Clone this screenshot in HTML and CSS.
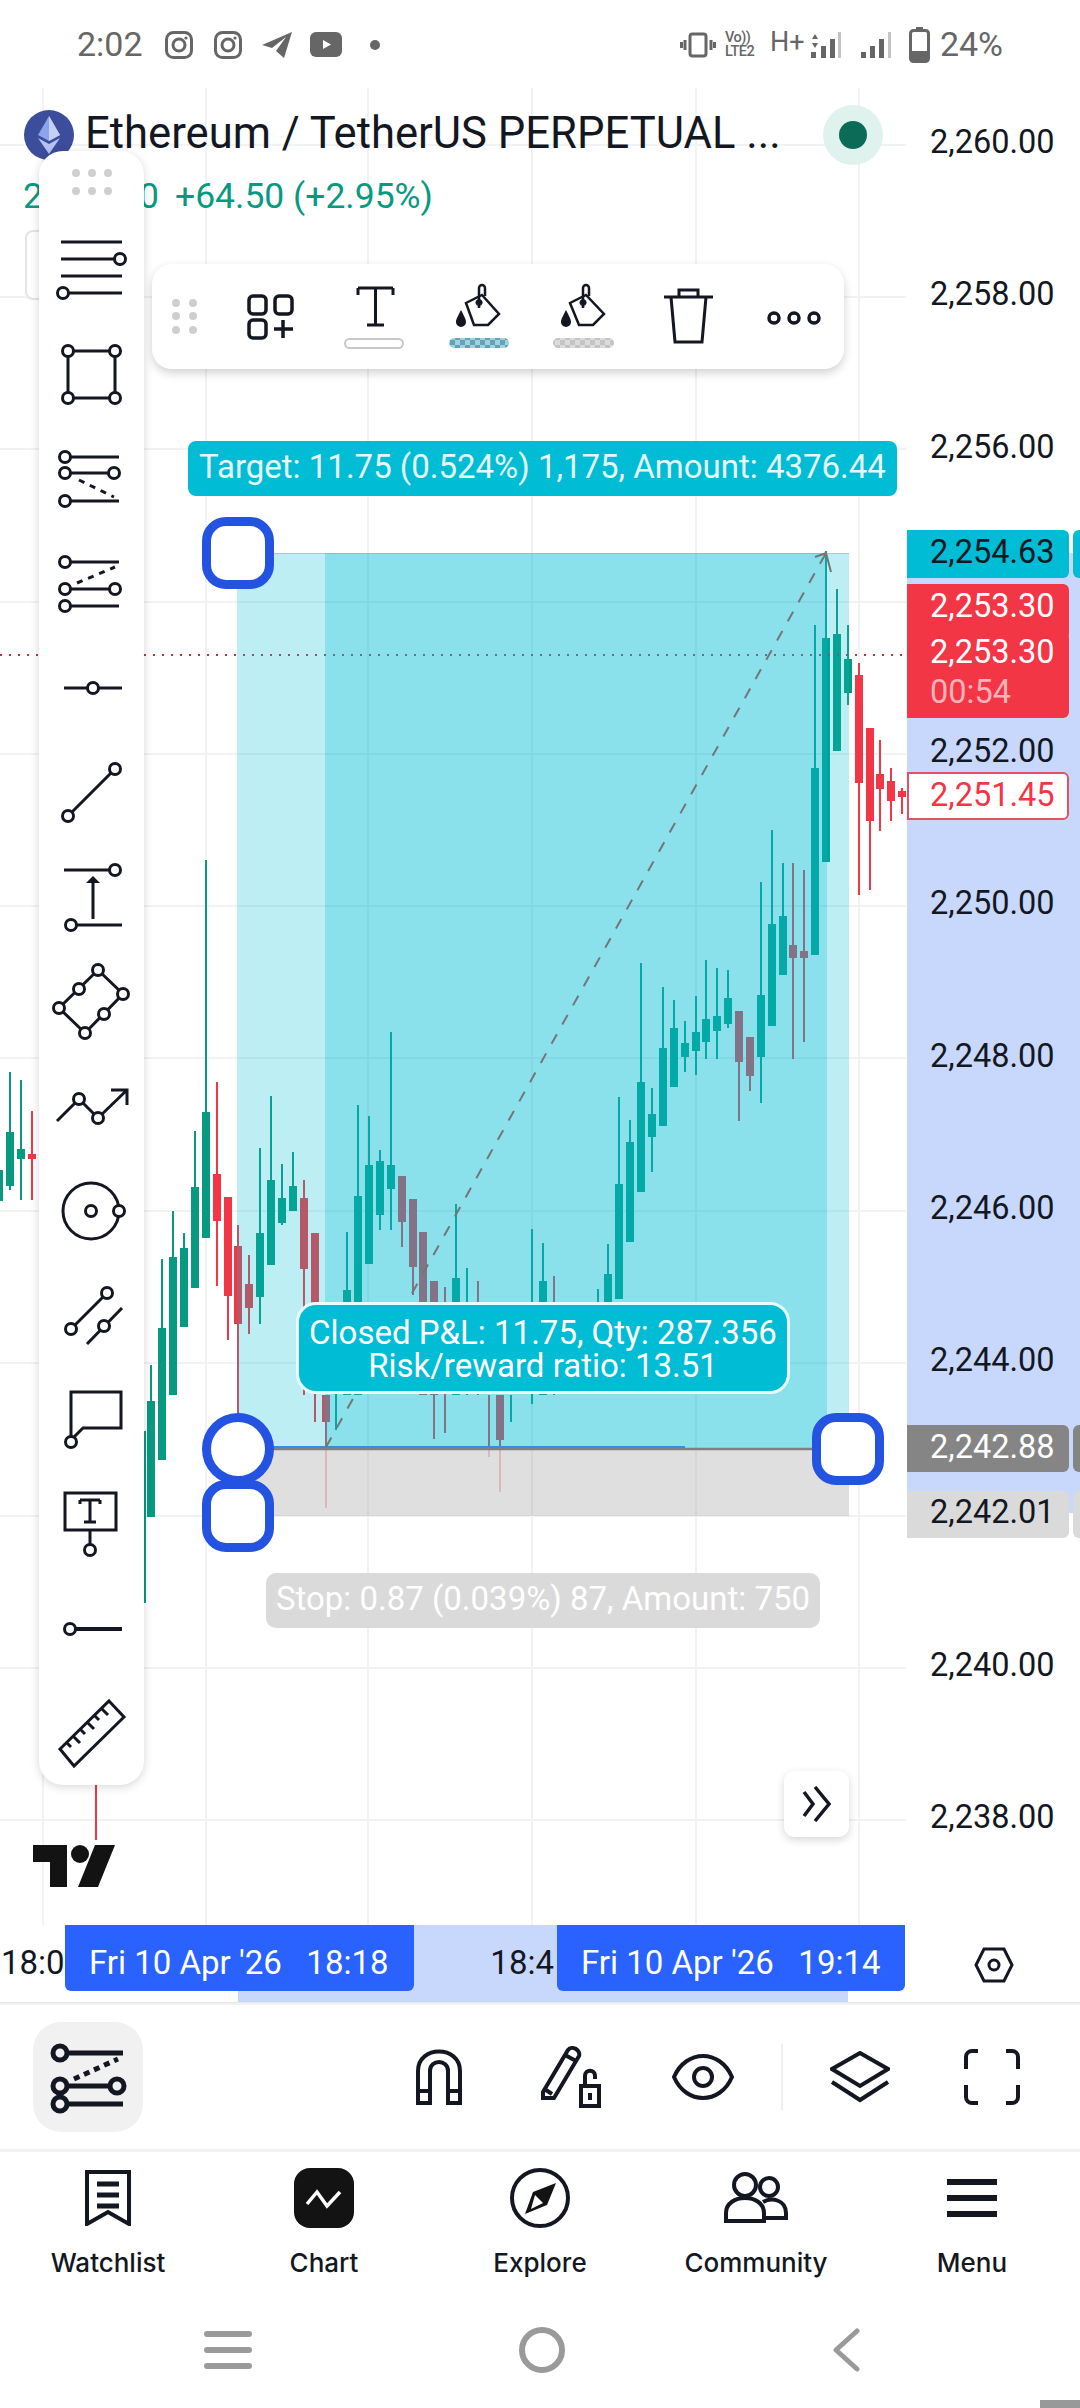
FILE: index.html
```html
<!DOCTYPE html>
<html lang="en">
<head>
<meta charset="utf-8">
<title>Ethereum / TetherUS chart</title>
<link rel="stylesheet" href="styles.css">
</head>
<body>
<div class="screen">
  <div class="status">
    <span class="time">2:02</span>
    <svg class="st st-ig1" width="28" height="28" viewBox="0 0 28 28"><rect x="1.5" y="1.5" width="25" height="25" rx="7"/><circle cx="14" cy="14" r="6"/><circle class="f" cx="21" cy="7" r="1.6"/></svg>
    <svg class="st st-ig2" width="28" height="28" viewBox="0 0 28 28"><rect x="1.5" y="1.5" width="25" height="25" rx="7"/><circle cx="14" cy="14" r="6"/><circle class="f" cx="21" cy="7" r="1.6"/></svg>
    <svg class="st st-tg" width="30" height="28" viewBox="0 0 30 28"><path class="f" d="M30 1 L0 14 L10 17 L24 6 L14 20 L22 27 Z"/></svg>
    <svg class="st st-yt" width="32" height="26" viewBox="0 0 32 26"><rect class="f" x="0" y="0" width="32" height="25" rx="6"/><path class="wf" d="M13 8 L21 12.5 L13 17 Z"/></svg>
    <span class="st-dot"></span>
    <span class="status-gap"></span>
    <svg class="st st-vib" width="36" height="26" viewBox="0 0 36 26"><rect x="10" y="2" width="16" height="22" rx="2.5"/><path d="M5 8V18M1.500 10V16M31 8V18M34.500 10V16"/></svg>
    <span class="volte">Vo))<br>LTE2</span>
    <span class="hplus">H+</span>
    <svg class="st st-sig1" width="32" height="28" viewBox="0 0 32 28"><path class="f" d="M2 8L5 3L8 8ZM2 12L5 17L8 12Z"/><path class="f" d="M1 21h5v6H1zM11 15h5v12h-5zM20 8h5v19h-5z"/><path class="f lt" d="M28 1h3v26h-3z"/></svg>
    <svg class="st st-sig2" width="32" height="28" viewBox="0 0 32 28"><path class="f" d="M1 21h5v6H1zM10 15h5v12h-5zM19 8h5v19h-5z"/><path class="f lt" d="M28 1h3v26h-3z"/></svg>
    <svg class="st st-bat" width="21" height="36" viewBox="0 0 21 36"><path class="f" d="M7 0h7v3H7z"/><rect x="1.500" y="3.500" width="18" height="31" rx="3"/><path class="f" d="M2 24h17v9a2 2 0 0 1-2 2H4a2 2 0 0 1-2-2z"/></svg>
    <span class="pct">24%</span>
  </div>

  <div class="chart-row">
    <div class="plot">
      <svg class="canvas" width="907" height="1837" viewBox="0 88 907 1837">
        <path class="grid" d="M0 145H906M0 297H906M0 449H906M0 602H906M0 754H906M0 906H906M0 1058H906M0 1211H906M0 1363H906M0 1516H906M0 1668H906M0 1820H906M43 88V1925M206 88V1925M368 88V1925M532 88V1925M696 88V1925M859 88V1925"/>
        <path class="wick g" d="M10 1072V1190M21 1080V1200M145 1431V1603M151 1365V1517M162 1259V1460M173 1211V1395M184 1233V1327M195 1131V1288M206 860V1238M260 1148V1324M271 1096V1265M282 1164V1225M293 1152V1211M336 1390V1430M347 1232V1395M358 1105V1395M369 1116V1264M380 1150V1230M391 1032V1230M456 1204V1395M467 1268V1395M511 1395V1422M532 1229V1404M543 1243V1395M598 1289V1302M608 1244V1302M619 1097V1299M630 1120V1242M641 963V1192M652 1088V1172M663 987V1126M674 1000V1087M685 1021V1072M696 996V1075M706 960V1059M717 968V1059M728 970V1028M761 882V1103M772 830V1026M783 863V975M815 625V955M826 551V862M837 589V751M848 625V705"/>
        <path class="body g" d="M-1 1170V1201M10 1132V1186M21 1149V1159M151 1401V1517M162 1328V1460M173 1257V1395M184 1248V1327M195 1187V1288M206 1112V1238M260 1233V1297M271 1180V1265M282 1198V1223M293 1186V1211M347 1290V1395M358 1196V1395M369 1165V1264M380 1161V1215M391 1165V1189M456 1278V1395M543 1281V1395M608 1274V1302M619 1184V1299M630 1142V1242M641 1082V1192M652 1114V1137M663 1048V1126M674 1028V1087M685 1043V1057M696 1032V1051M706 1019V1042M717 1016V1031M728 998V1024M761 995V1057M772 924V1026M783 916V975M815 768V955M826 638V862M837 634V751M848 659V693"/>
        <path class="wick r" d="M32 1111V1200M96 1785V1840M217 1082V1286M228 1197V1340M238 1225V1413M249 1255V1334M304 1180V1395M315 1233V1422M326 1395V1447M402 1176V1247M413 1199V1295M423 1232V1395M434 1281V1439M445 1287V1433M478 1281V1395M489 1395V1447M500 1395V1447M554 1276V1395M739 1011V1121M750 1037V1091M793 863V1059M804 870V1042M859 663V895M870 728V890M880 740V831M891 768V821M902 788V814"/>
        <path class="body r" d="M32 1154V1159M217 1174V1221M228 1197V1296M238 1246V1324M249 1284V1308M304 1198V1269M315 1233V1334M326 1395V1422M402 1176V1222M413 1199V1267M423 1232V1395M434 1281V1395M500 1395V1440M739 1011V1062M750 1037V1076M793 945V958M804 951V958M859 675V783M870 728V821M880 774V789M891 781V801M902 791V797"/>
        <path class="dots" d="M0 655H906"/>
        <rect class="zone-a" x="237" y="553" width="612" height="895"/>
        <rect class="zone-b" x="325" y="553" width="502" height="895"/>
        <rect class="zone-s" x="237" y="1448" width="612" height="68"/>
        <path class="wick pale" d="M326 1449V1508M489 1449V1457M500 1449V1492"/>
        <path class="zone-top" d="M237 553.500H849"/>
        <path class="entry" d="M237 1449H849"/>
        <path class="entry-blue" d="M270 1447H685"/>
        <path class="dash" d="M326 1447L826 553"/>
        <path class="arrow" d="M815 557L826 553L831 572"/>
      </svg>

      <div class="box-behind"></div>
      <div class="header">
        <div class="title-wrap">
          <svg class="eth" width="50" height="50" viewBox="0 0 50 50"><circle cx="25" cy="25" r="25" fill="#3b4d9b"/><path d="M25 6L14 25L25 31L36 25Z" fill="#8da3ea"/><path d="M25 6V31L36 25Z" fill="#c3cff5"/><path d="M14 28L25 44L36 28L25 34Z" fill="#b4c3f1"/></svg>
          <span class="title">Ethereum / TetherUS PERPETUAL ...</span>
        </div>
        <span class="live"><span class="live-dot"></span></span>
      </div>
      <div class="quote"><span class="q-price">2,253.30</span><span>+64.50 (+2.95%)</span></div>

      <div class="handle sq h-tl"></div>
      <div class="handle sq h-bl"></div>
      <div class="handle rd h-ml"></div>
      <div class="handle sq h-mr"></div>

      <div class="tag tag-target">Target: 11.75 (0.524%) 1,175, Amount: 4376.44</div>
      <div class="tag tag-stop">Stop: 0.87 (0.039%) 87, Amount: 750</div>
      <div class="tag tag-pnl">Closed P&amp;L: 11.75, Qty: 287.356<br>Risk/reward ratio: 13.51</div>

      <div class="float-bar">
        <svg class="ft" width="692" height="105" viewBox="152 264 692 105">
          <defs>
            <pattern id="chk-a" width="10" height="10" patternUnits="userSpaceOnUse"><rect width="10" height="10" fill="#a5cfdc"/><rect width="5" height="5" fill="#5fa5ba"/><rect x="5" y="5" width="5" height="5" fill="#5fa5ba"/></pattern>
            <pattern id="chk-b" width="10" height="10" patternUnits="userSpaceOnUse"><rect width="10" height="10" fill="#dcdcdc"/><rect width="5" height="5" fill="#c4c4c4"/><rect x="5" y="5" width="5" height="5" fill="#c4c4c4"/></pattern>
          </defs>
          <path class="grip" d="M176 303v.01M193 303v.01M176 316v.01M193 316v.01M176 330v.01M193 330v.01"/>
          <g class="ln">
            <rect x="249" y="296" width="17" height="18" rx="4"/><rect x="275" y="296" width="17" height="18" rx="4"/><rect x="249" y="320" width="17" height="18" rx="4"/>
            <path d="M283 320V338M274 329H293"/>
            <path d="M358 288H393M358 288V295M393 288V295M375.500 288V325M367 325H384" class="thin"/>
            <path class="b" d="M466 303L482 295L499 314L488 325L474 325Z"/><path class="b" d="M479 308V288a3 3 0 0 1 6 0V296"/>
            <path class="b" d="M570 303L586 295L604 314L593 325L579 325Z"/><path class="b" d="M583 308V288a3 3 0 0 1 6 0V296"/>
            <path class="thin" d="M664 297H713M671 297L675 342H702L706 297M679 297V290H698V297"/>
            <circle cx="774" cy="318" r="5"/><circle cx="794" cy="318" r="5"/><circle cx="814" cy="318" r="5"/>
          </g>
          <path class="solid" d="M461 310C464 316 466 319 466 322a5 5 0 0 1-10 0C456 319 458 316 461 310ZM566 310C569 316 571 319 571 322a5 5 0 0 1-10 0C561 319 563 316 566 310ZM479 306a3.500 3.500 0 1 1 .1 0ZM583 306a3.500 3.500 0 1 1 .1 0Z"/>
          <rect class="sw-t" x="345" y="339" width="58" height="9" rx="4.500"/>
          <rect x="449" y="338" width="60" height="10" rx="5" fill="url(#chk-a)"/>
          <rect x="553" y="338" width="61" height="10" rx="5" fill="url(#chk-b)"/>
        </svg>
      </div>

      <div class="left-bar">
        <svg class="grip-top" width="40" height="32" viewBox="0 0 40 32"><path class="grip" d="M4 6v.01M20 6v.01M36 6v.01M4 24v.01M20 24v.01M36 24v.01"/></svg>
        <div class="tool"><svg class="ic" viewBox="0 0 88 88"><path d="M13 16H74M13 33H66M13 50H74M21 67H74"/><circle cx="72" cy="33" r="5.500"/><circle cx="15" cy="67" r="5.500"/></svg></div>
        <div class="tool"><svg class="ic" viewBox="0 0 88 88"><path d="M20 20H67V67H20Z"/><circle cx="20" cy="20" r="5.500"/><circle cx="67" cy="20" r="5.500"/><circle cx="20" cy="67" r="5.500"/><circle cx="67" cy="67" r="5.500"/></svg></div>
        <div class="tool"><svg class="ic" viewBox="0 0 88 88"><path d="M17 22H71M17 38H66M17 66H71"/><path class="dsh" d="M31 45L66 62"/><circle cx="17" cy="22" r="5.500"/><circle cx="17" cy="38" r="5.500"/><circle cx="66" cy="38" r="5.500"/><circle cx="17" cy="66" r="5.500"/></svg></div>
        <div class="tool"><svg class="ic" viewBox="0 0 88 88"><path d="M17 22H71M17 49H67M17 66H71"/><path class="dsh" d="M29 43L67 27"/><circle cx="17" cy="22" r="5.500"/><circle cx="17" cy="49" r="5.500"/><circle cx="67" cy="49" r="5.500"/><circle cx="17" cy="66" r="5.500"/></svg></div>
        <div class="tool"><svg class="ic" viewBox="0 0 88 88"><path d="M16 44H74"/><circle cx="45" cy="44" r="5.500"/></svg></div>
        <div class="tool"><svg class="ic" viewBox="0 0 88 88"><path d="M20 67L67 20"/><circle cx="20" cy="67" r="5.500"/><circle cx="67" cy="20" r="5.500"/></svg></div>
        <div class="tool"><svg class="ic" viewBox="0 0 88 88"><path d="M16 17H67M23 72H74M45 66V30"/><path class="fl" d="M38 30H52L45 23Z"/><circle cx="67" cy="17" r="5.500"/><circle cx="23" cy="72" r="5.500"/></svg></div>
        <div class="tool"><svg class="ic" viewBox="0 0 88 88"><path d="M50 12L75 36L37 75L11 50Z"/><circle cx="50" cy="12" r="5.500"/><circle cx="75" cy="36" r="5.500"/><circle cx="56" cy="56" r="5.500"/><circle cx="37" cy="75" r="5.500"/><circle cx="11" cy="50" r="5.500"/><circle cx="31" cy="31" r="5.500"/></svg></div>
        <div class="tool"><svg class="ic" viewBox="0 0 88 88"><path d="M9 59L31 37L50 56L79 28M63 28H79V43"/><circle cx="31" cy="37" r="5.500"/><circle cx="50" cy="56" r="5.500"/></svg></div>
        <div class="tool"><svg class="ic" viewBox="0 0 88 88"><circle cx="43" cy="44" r="28"/><circle cx="43" cy="44" r="5.500"/><circle cx="71" cy="44" r="5.500"/></svg></div>
        <div class="tool"><svg class="ic" viewBox="0 0 88 88"><path d="M23 58L59 22M39 73L74 37"/><circle cx="23" cy="58" r="5.500"/><circle cx="59" cy="22" r="5.500"/><circle cx="56" cy="55" r="5.500"/></svg></div>
        <div class="tool"><svg class="ic" viewBox="0 0 88 88"><path d="M23 60V16H73V52H35L25 62"/><circle cx="23" cy="66" r="5.500"/></svg></div>
        <div class="tool"><svg class="ic" viewBox="0 0 88 88"><path d="M17 13H68V50H17ZM42 50V64M32 20H52M32 20V24M52 20V24M42 20V42M36 42H48"/><circle cx="42" cy="70" r="5.500"/></svg></div>
        <div class="tool"><svg class="ic" viewBox="0 0 88 88"><path class="th" d="M28 44H74"/><circle cx="22" cy="44" r="5.500"/></svg></div>
        <div class="tool"><svg class="ic" viewBox="0 0 88 88"><path d="M61 12L76 28L26 77L12 60ZM54 20L60 26M47 27L51 31M40 34L46 40M33 41L37 45M26 48L32 54M19 54L23 58"/></svg></div>
      </div>

      <div class="expand"><svg width="30" height="36" viewBox="0 0 30 36"><path d="M2 6L11 18L2 30M13 1L27 18L13 35"/></svg></div>
      <svg class="tv" width="82" height="42" viewBox="0 0 82 42"><path d="M0 0H34V42H17V17H0ZM82 0L65 42H45L62 0Z"/><circle cx="47" cy="9" r="9"/></svg>
    </div>

    <div class="axis">
      <div class="range"></div>
      <div class="rows">
        <div class="row">2,260.00</div><div class="row">2,258.00</div><div class="row">2,256.00</div><div class="row"></div>
        <div class="row">2,252.00</div><div class="row">2,250.00</div><div class="row">2,248.00</div><div class="row">2,246.00</div>
        <div class="row">2,244.00</div><div class="row"></div><div class="row">2,240.00</div><div class="row">2,238.00</div>
      </div>
      <div class="pt pt-cy pt-target">2,254.63</div><div class="pt-tab cy t-target"></div>
      <div class="pt pt-rd pt-r1">2,253.30</div>
      <div class="pt pt-rd pt-r2">2,253.30<br><span class="cd">00:54</span></div>
      <div class="pt pt-ol">2,251.45</div>
      <div class="pt pt-gr">2,242.88</div><div class="pt-tab gr t-gr"></div>
      <div class="pt pt-lg">2,242.01</div><div class="pt-tab lg t-lg"></div>
    </div>
  </div>

  <div class="time-axis">
    <div class="t-range"></div>
    <span class="t-a">18:0</span>
    <span class="chip chip-a">Fri 10 Apr '26&nbsp;&nbsp;&nbsp;18:18</span>
    <span class="t-b">18:4</span>
    <span class="chip chip-b">Fri 10 Apr '26&nbsp;&nbsp;&nbsp;19:14</span>
    <span class="t-set"><svg width="40" height="36" viewBox="0 0 40 36"><path d="M10 2H30L38 18L30 34H10L2 18Z"/><circle cx="20" cy="18" r="5"/></svg></span>
  </div>

  <div class="tools">
    <div class="pill"><svg width="100" height="76" viewBox="0 0 100 76"><path d="M26 14H85M26 47H79M26 65H85"/><path class="d" d="M36 40L80 20"/><circle cx="22" cy="14" r="7"/><circle cx="22" cy="47" r="7"/><circle cx="79" cy="47" r="7"/><circle cx="22" cy="65" r="7"/></svg></div>
    <div class="tool-btn"><svg width="46" height="56" viewBox="0 0 46 56"><path d="M2 54V22C2 -4 44 -4 44 22V54H32V22C32 10 14 10 14 22V54ZM2 42H14M32 42H44"/></svg></div>
    <div class="tool-btn"><svg width="60" height="62" viewBox="0 0 60 62"><path d="M2 46L27 4C31 -1 40 4 38 10L13 52L2 52ZM24 9L35 15M2 42L11 48"/><path d="M40 40H58V60H40ZM44 40V30C44 23 54 23 54 30V33"/><path class="bf" d="M47 47h4v7h-4z"/></svg></div>
    <div class="tool-btn"><svg width="62" height="46" viewBox="0 0 62 46"><path d="M2 23C14 -5 48 -5 60 23C48 51 14 51 2 23Z"/><circle cx="31" cy="23" r="9"/></svg></div>
    <span class="tool-sep"></span>
    <div class="tool-btn"><svg width="60" height="52" viewBox="0 0 60 52"><path d="M30 2L58 18L30 35L2 18ZM2 31L30 49L58 31"/></svg></div>
    <div class="tool-btn"><svg width="56" height="56" viewBox="0 0 56 56"><path d="M2 20V8a6 6 0 0 1 6-6H14M42 2H48a6 6 0 0 1 6 6V20M2 36V48a6 6 0 0 0 6 6H14M42 54H48a6 6 0 0 0 6-6V36"/></svg></div>
  </div>

  <div class="tabs">
    <div class="tab"><div class="tab-ic"><svg width="46" height="56" viewBox="0 0 46 56"><path class="t2" d="M2 2H44V54L23 42L2 54Z"/><path class="t3" d="M12 14H34M12 25H34M12 36H34"/></svg></div><span>Watchlist</span></div>
    <div class="tab"><div class="tab-ic"><svg width="60" height="60" viewBox="0 0 60 60"><rect class="black" width="60" height="60" rx="16"/><path class="wl" d="M13 36L23 24L33 38L46 24"/></svg></div><span>Chart</span></div>
    <div class="tab"><div class="tab-ic"><svg width="60" height="60" viewBox="0 0 60 60"><circle class="t2" cx="30" cy="30" r="28"/><path class="black" d="M46 15L37 37L15 46L23 24Z"/><path class="white" d="M21 41L25 27L33 35Z"/></svg></div><span>Explore</span></div>
    <div class="tab"><div class="tab-ic"><svg width="64" height="52" viewBox="0 0 64 52"><circle class="t2" cx="21" cy="13" r="11"/><ellipse class="t2" cx="45" cy="15" rx="9" ry="9"/><path class="t2" d="M2 49V41C2 21 40 21 40 41V49Z"/><path class="t2" d="M40 46H62V41C62 28 48 25 39 30"/></svg></div><span>Community</span></div>
    <div class="tab"><div class="tab-ic"><svg width="50" height="38" viewBox="0 0 50 38"><path class="bf" d="M0 0H50V6H0ZM0 16H50V22H0ZM0 32H50V38H0Z"/></svg></div><span>Menu</span></div>
  </div>

  <div class="nav">
    <svg width="48" height="42" viewBox="0 0 48 42"><path class="n" d="M3 5H45M3 21H45M3 37H45"/></svg>
    <span class="nav-circle"></span>
    <svg width="30" height="44" viewBox="0 0 30 44"><path class="c" d="M26 3L5 22L26 41"/></svg>
    <span class="corner"></span>
  </div>
</div>
</body>
</html>
```
FILE: styles.css
```css
* { box-sizing: border-box; }
html, body { margin: 0; padding: 0; background: #fff; }
body { font-family: Roboto, "Liberation Sans", sans-serif; color: #131722; }
.screen { width: 1080px; height: 2408px; display: flex; flex-direction: column; overflow: hidden; position: relative; background: #fff; }

/* status bar */
.status { flex: 0 0 88px; height: 88px; display: flex; align-items: center; padding: 2px 0 0 77px; color: #666; }
.time { font-size: 34px; width: 65px; margin-top: -2px; white-space: nowrap; }
.st rect, .st circle, .st path { fill: none; stroke: #666; stroke-width: 3; }
.st .f { fill: #666; stroke: none; }
.st .lt { fill: #c4c4c4; }
.st .wf { fill: #fff; stroke: none; }
.st-ig1 { margin-left: 23px; }
.st-ig2 { margin-left: 21px; }
.st-tg { margin-left: 20px; }
.st-yt { margin-left: 18px; }
.st-dot { width: 10px; height: 10px; border-radius: 50%; background: #666; margin-left: 28px; }
.status-gap { flex: 1; }
.volte { font-size: 14.500px; line-height: 14px; font-weight: 500; margin-left: 9px; width: 34px; letter-spacing: -0.5px; white-space: nowrap; }
.hplus { font-size: 27px; margin-left: 11px; width: 32px; margin-top: -6px; white-space: nowrap; }
.st-sig1 { margin-left: 8px; }
.st-sig2 { margin-left: 18px; }
.st-bat { margin-left: 17px; margin-top: -1px; }
.pct { font-size: 34px; margin: -2px 77px 0 10px; white-space: nowrap; }

/* chart */
.chart-row { flex: 0 0 1837px; height: 1837px; display: flex; position: relative; }
.plot { flex: 0 0 907px; position: relative; }
.canvas { display: block; position: absolute; left: 0; top: 0; }
.grid { stroke: #f1f2f4; stroke-width: 2; fill: none; }
.wick { stroke-width: 2; fill: none; }
.body { stroke-width: 8; fill: none; }
.g { stroke: #089981; }
.r { stroke: #f23645; }
.pale { stroke: #dfb7ba; }
.dots { stroke: #c2303f; stroke-width: 2; stroke-dasharray: 2 7; fill: none; }
.zone-a { fill: rgba(0, 188, 212, 0.26); }
.zone-b { fill: rgba(0, 188, 212, 0.27); }
.zone-s { fill: rgba(128, 128, 128, 0.25); }
.zone-top { stroke: rgba(0, 188, 212, 0.35); stroke-width: 1; }
.entry { stroke: #808080; stroke-width: 2.500; }
.entry-blue { stroke: #2f8fe0; stroke-width: 2; }
.dash { stroke: #757575; stroke-width: 2; stroke-dasharray: 11 11; fill: none; }
.arrow { stroke: #757575; stroke-width: 2; fill: none; }

.box-behind { position: absolute; left: 25px; top: 142px; width: 40px; height: 70px; border: 2px solid #e4e4e4; border-radius: 8px; background: #fff; }
.header { position: absolute; left: 24px; top: 17px; width: 859px; height: 60px; display: flex; align-items: center; justify-content: space-between; }
.title-wrap { display: flex; align-items: center; }
.eth { display: block; }
.title { font-size: 43.600px; margin-left: 11px; margin-top: -3px; color: #131722; white-space: nowrap; }
.live { width: 60px; height: 60px; border-radius: 50%; background: #dff2ee; display: flex; align-items: center; justify-content: center; }
.live-dot { width: 28px; height: 28px; border-radius: 50%; background: #0a6b57; }
.quote { position: absolute; left: 23px; top: 88px; font-size: 35.500px; line-height: 40px; color: #089981; white-space: nowrap; }
.q-price { display: inline-block; width: 152px; }

.handle { position: absolute; width: 72px; height: 72px; background: #fff; border: 9px solid #2453e1; }
.sq { border-radius: 24px; }
.rd { border-radius: 50%; }
.h-tl { left: 202px; top: 429px; }
.h-bl { left: 202px; top: 1392px; }
.h-ml { left: 202px; top: 1325px; }
.h-mr { left: 812px; top: 1325px; }

.tag { position: absolute; color: #fff; font-size: 33px; text-align: center; white-space: nowrap; }
.tag-target { left: 188px; top: 353px; width: 709px; height: 55px; line-height: 52px; background: #00bcd4; border-radius: 8px; color: #e6f9fc; }
.tag-stop { left: 266px; top: 1485px; width: 554px; height: 55px; line-height: 52px; background: #dadada; border-radius: 10px; }
.tag-pnl { left: 296px; top: 1214px; width: 494px; height: 92px; padding-top: 11px; line-height: 33px; background: #00bcd4; border: 3px solid #e8fbfd; border-radius: 20px; }

.float-bar { position: absolute; left: 152px; top: 176px; width: 692px; height: 105px; background: #fff; border-radius: 20px; box-shadow: 0 4px 10px rgba(0, 0, 0, 0.18); }
.ft { display: block; }
.grip { stroke: #cfcfcf; stroke-width: 8; stroke-linecap: round; fill: none; }
.ln { fill: none; stroke: #131722; stroke-width: 3.500; }
.ln .thin { stroke-width: 3; }
.ln .b { stroke-width: 2.500; }
.solid { fill: #131722; }
.sw-t { fill: #fff; stroke: #c8c8c8; stroke-width: 2; }

.left-bar { position: absolute; left: 39px; top: 63px; width: 105px; height: 1634px; background: #fff; border-radius: 24px; box-shadow: 0 2px 10px rgba(0, 0, 0, 0.16); display: flex; flex-direction: column; align-items: center; }
.grip-top { flex: 0 0 32px; margin: 16px 0 18.750px; }
.tool { flex: 0 0 104.500px; height: 104.500px; display: flex; align-items: center; justify-content: center; }
.ic { width: 88px; height: 88px; display: block; fill: none; stroke: #131722; stroke-width: 3; }
.ic circle { fill: #fff; stroke-width: 3; }
.ic .dsh { stroke-dasharray: 6 6; }
.ic .fl { fill: #131722; stroke: none; }
.ic .th { stroke-width: 4; }

.expand { position: absolute; left: 784px; top: 1683px; width: 65px; height: 66px; background: #fff; border-radius: 10px; box-shadow: 0 3px 8px rgba(0, 0, 0, 0.16); display: flex; align-items: center; justify-content: center; }
.expand path { fill: none; stroke: #131722; stroke-width: 3.500; }
.tv { position: absolute; left: 33px; top: 1757px; fill: #131313; }

/* price axis */
.axis { flex: 1; position: relative; }
.range { position: absolute; left: 0; right: 0; top: 465px; height: 960px; background: #c8d7fc; }
.rows { position: relative; padding: 34px 0 0 23px; font-size: 32.500px; line-height: 40px; }
.row { height: 152.300px; }
.pt { position: absolute; left: 0; width: 162px; padding-left: 23px; font-size: 32.500px; line-height: 40px; border-radius: 0 6px 6px 0; }
.pt-target { top: 442px; height: 48px; padding-top: 2px; background: #00bcd4; color: #131722; }
.pt-rd { background: #f23645; color: #fff; }
.pt-r1 { top: 496px; height: 56px; padding-top: 2px; }
.pt-r2 { top: 544px; height: 86px; padding-top: 0; }
.cd { color: #f9b3ba; }
.pt-ol { top: 684px; height: 48px; padding-top: 1px; background: #fff; color: #f23645; border: 2px solid #e0525f; padding-left: 21px; }
.pt-gr { top: 1337px; height: 47px; padding-top: 2px; background: #858585; color: #fff; }
.pt-lg { top: 1403px; height: 47px; padding-top: 1px; background: #dadada; color: #131722; }
.pt-tab { position: absolute; left: 166px; width: 7px; border-radius: 6px 0 0 6px; }
.cy { background: #00bcd4; }
.gr { background: #858585; }
.lg { background: #dadada; }
.t-target { top: 442px; height: 48px; }
.t-gr { top: 1337px; height: 47px; }
.t-lg { top: 1403px; height: 47px; }

/* time axis */
.time-axis { flex: 0 0 78px; height: 78px; position: relative; display: flex; align-items: flex-start; font-size: 33px; border-bottom: 1px solid #e6e6e6; }
.t-range { position: absolute; left: 238px; top: 0; width: 610px; height: 77px; background: #c8d7fc; }
.t-a, .t-b, .chip, .t-set { position: relative; line-height: 76px; height: 66px; white-space: nowrap; }
.t-a { flex: 0 0 65px; padding-left: 1px; color: #131722; overflow: hidden; }
.t-b { flex: 0 0 143px; text-align: right; padding-right: 3px; }
.chip { background: #2962ff; color: #fff; border-radius: 0 0 6px 6px; font-size: 33px; }
.chip-a { flex: 0 0 349px; padding-left: 24px; }
.chip-b { flex: 0 0 348px; padding-left: 24px; }
.t-set { flex: 1; display: flex; align-items: center; justify-content: center; padding-top: 2px; height: 78px; }
.t-set svg { display: block; margin-left: 2px; }
.t-set path, .t-set circle { fill: none; stroke: #131722; stroke-width: 3; }

/* drawing toolbar */
.tools { flex: 0 0 146px; height: 146px; display: flex; align-items: center; border-top: 2px solid #f1f1f1; padding-left: 33px; }
.pill { flex: 0 0 110px; height: 110px; background: #f1f1f1; border-radius: 28px; display: flex; align-items: center; justify-content: center; margin-right: 230px; }
.pill path, .pill circle { fill: none; stroke: #131722; stroke-width: 5; }
.pill circle { fill: #f1f1f1; }
.pill .d { stroke-dasharray: 6 5; }
.tool-btn { flex: 0 0 132px; display: flex; align-items: center; justify-content: center; }
.tool-btn path, .tool-btn circle { fill: none; stroke: #131722; stroke-width: 4; }
.tool-btn .bf { fill: #131722; stroke: none; }
.tool-sep { flex: 0 0 2px; height: 66px; background: #efefef; margin: 0 11px 0 12px; }
svg { flex: none; }

/* tabs */
.tabs { flex: 0 0 155px; height: 155px; display: flex; border-top: 3px solid #f1f1f1; }
.tab { flex: 0 0 216px; display: flex; flex-direction: column; align-items: center; font-family: Inter, Roboto, sans-serif; font-size: 26px; font-weight: 500; color: #131722; }
.tab-ic { height: 64px; margin-top: 14px; display: flex; align-items: center; justify-content: center; }
.tab span { line-height: 34px; margin-top: 16px; }
.t2 { fill: none; stroke: #131722; stroke-width: 4; }
.t3 { fill: none; stroke: #131722; stroke-width: 5; }
.black { fill: #131313; }
.white { fill: #fff; }
.bf { fill: #131722; }
.wl { fill: none; stroke: #fff; stroke-width: 3.500; }

/* nav */
.nav { flex: 1; display: flex; align-items: center; justify-content: space-between; padding: 0 219px 12px 204px; position: relative; }
.n { fill: none; stroke: #9a9a9a; stroke-width: 6; stroke-linecap: round; }
.c { fill: none; stroke: #9a9a9a; stroke-width: 5; stroke-linecap: round; stroke-linejoin: round; }
.nav-circle { width: 46px; height: 46px; border: 6px solid #9a9a9a; border-radius: 50%; }
.corner { position: absolute; right: 0; bottom: 0; width: 40px; height: 8px; background: #999; }
```
